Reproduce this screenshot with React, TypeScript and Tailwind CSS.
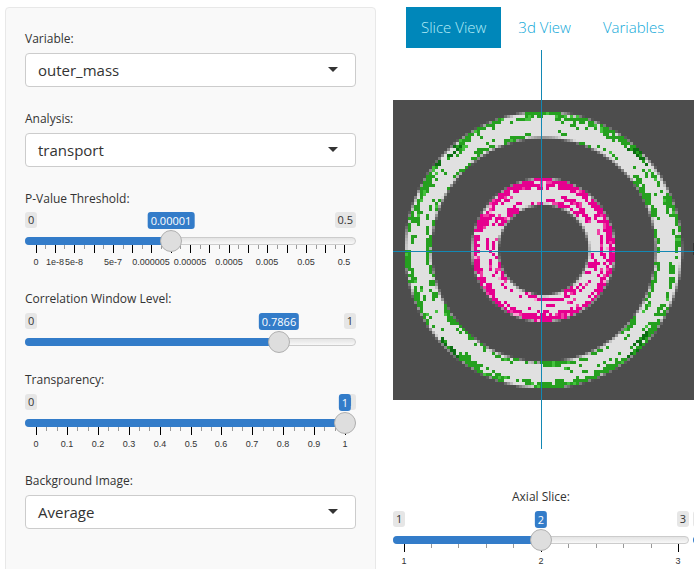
import { ReactNode } from "react";

const font = "font-['Open_Sans','Noto_Sans',sans-serif]";

function hash(a: number, b: number, c = 0) {
  let h = (a * 374761393 + b * 668265263 + c * 2147483647) | 0;
  h = Math.imul(h ^ (h >>> 13), 1274126177);
  h = Math.imul(h ^ (h >>> 15), 2246822519);
  return ((h ^ (h >>> 16)) >>> 0) / 4294967296;
}

function mix(t: number) {
  const v = Math.round(0x4d + (0xe0 - 0x4d) * t);
  return `rgb(${v},${v},${v})`;
}

// builds the voxel picture as one path per colour
function buildVoxels() {
  const cx = 150.5;
  const cy = 150;
  const cells: Record<string, string[]> = {};
  const put = (color: string, i: number, j: number) => {
    (cells[color] ||= []).push(`M${i * 3} ${j * 3}h3v3h-3z`);
  };
  for (let j = 0; j < 100; j++) {
    for (let i = 0; i < 101; i++) {
      const dx = i * 3 + 1.5 - cx;
      const dy = j * 3 + 1.5 - cy;
      const r = Math.hypot(dx, dy);
      const th = Math.atan2(dy, dx);
      const outerRing = r > 100;
      const rOut = outerRing ? 138 : 71.5;
      const rIn = outerRing ? 112.5 : 45.5;
      const a = Math.min(
        Math.max(0, Math.min(1, (rOut - r) / 3 + 0.5)),
        Math.max(0, Math.min(1, (r - rIn) / 3 + 0.5)),
      );
      if (a <= 0) continue;
      const dO = rOut - r;
      const dI = r - rIn;
      // streaks run along the ring, so noise cells are long in arc length
      const arc = (th + Math.PI) * r;
      const band = Math.floor(r / 3);
      const cell = hash(Math.floor(arc / 13 + (band % 2) * 0.5), band, outerRing ? 1 : 2);
      const gap = hash(Math.floor((th + Math.PI) * 7), outerRing ? 3 : 4);
      const n = hash(i, j);
      let hit = false;
      if (outerRing) {
        if (dO < 4) hit = gap > 0.15 && cell > 0.1;
        else if (dO < 7) hit = cell > 0.48 - gap * 0.2;
        else if (dO < 10.5) hit = cell > 0.8;
        else if (dI < 3) hit = cell > 0.55;
        else if (dI < 6) hit = cell > 0.6;
        else if (dI < 9) hit = cell > 0.86;
        else hit = n < 0.012;
      } else {
        if (dO < 0.5) hit = false;
        else if (dO < 7) hit = cell > 0.1;
        else if (dO < 11) hit = cell > 0.7;
        else if (dI < 2) hit = cell > 0.7;
        else if (dI < 7) hit = cell > 0.58;
        else hit = cell > 0.75;
      }
      if (a >= 0.5 && hit && n < 0.9) {
        const k = hash(i, j, 7);
        if (outerRing) {
          const diag = Math.abs(Math.sin(2 * th));
          if (diag > 0.97 && dO < 9 && k < 0.6) put("#0b6e12", i, j);
          else if (k < 0.08) put("#45c23e", i, j);
          else put("#25a01f", i, j);
        } else if (k < 0.12) put("#f03fa6", i, j);
        else if (k < 0.16) put("#f9a3d2", i, j);
        else put("#e6008f", i, j);
      } else {
        put(mix(a), i, j);
      }
    }
  }
  return Object.entries(cells).map(([color, parts]) => ({ color, d: parts.join("") }));
}

const voxels = buildVoxels();

function Label({ children, className = "" }: { children: ReactNode; className?: string }) {
  return <div className={`h-[18px] text-[12px] leading-[18px] text-[#333] ${className}`}>{children}</div>;
}

function Select({ value }: { value: string }) {
  return (
    <div className="flex h-[34px] items-center justify-between rounded border border-[#ccc] bg-white pl-3 pr-[17px] text-[15px] text-[#333]">
      <span>{value}</span>
      <svg width="10" height="5" viewBox="0 0 10 5" className="mb-px">
        <path d="M0 0h10L5 5z" fill="#333" />
      </svg>
    </div>
  );
}

type Mark = { x: number; label: string };

function Slider(props: {
  width: string;
  height: string;
  minLabel: string;
  maxLabel: string;
  value: string;
  at: number;
  marks?: Mark[];
  minor?: number[];
}) {
  const { width, height, minLabel, maxLabel, value, at, marks = [], minor = [] } = props;
  return (
    <div className={`relative ${width} ${height}`}>
      <span className="absolute left-0 top-0 rounded-[3px] bg-[#e6e6e6] px-[3px] text-[11px] leading-4 text-[#333]">{minLabel}</span>
      <span className="absolute right-0 top-0 rounded-[3px] bg-[#e6e6e6] px-[3px] text-[11px] leading-4 text-[#333]">{maxLabel}</span>
      <span
        className="absolute top-0 -translate-x-1/2 whitespace-nowrap rounded-[3px] bg-[#337cc9] px-[3px] text-[11px] leading-[17px] text-white"
        style={{ left: at }}
      >
        {value}
      </span>
      <div className="absolute inset-x-0 top-[25px] h-2 rounded-full border border-[#ccc] bg-gradient-to-b from-[#e4e4e4] to-[#f8f8f8]" />
      <div className="absolute left-0 top-[25px] h-2 rounded-l-full bg-[#337cc9]" style={{ width: at }} />
      {minor.map((x) => (
        <i key={x} className="absolute top-[33px] h-1 w-px bg-[#999]" style={{ left: x }} />
      ))}
      {marks.map((m) => (
        <i key={m.x} className="absolute top-[33px] h-2 w-px bg-black" style={{ left: m.x }} />
      ))}
      {marks.map((m) => (
        <span
          key={m.x}
          className="absolute top-[44px] -translate-x-1/2 whitespace-nowrap font-['Liberation_Sans',sans-serif] text-[9px] leading-3 text-[#333]"
          style={{ left: m.x }}
        >
          {m.label}
        </span>
      ))}
      <div
        className="absolute top-[18px] size-[22px] -translate-x-1/2 rounded-full border border-[#b0b0b0] bg-[#dedede]"
        style={{ left: at }}
      />
    </div>
  );
}

const pMarks: Mark[] = [
  { x: 11, label: "0" },
  { x: 30, label: "1e-8" },
  { x: 49, label: "5e-8" },
  { x: 69, label: "" },
  { x: 88, label: "5e-7" },
  { x: 107, label: "" },
  { x: 126, label: "0.000005" },
  { x: 146, label: "" },
  { x: 165, label: "0.00005" },
  { x: 184, label: "" },
  { x: 204, label: "0.0005" },
  { x: 223, label: "" },
  { x: 242, label: "0.005" },
  { x: 262, label: "" },
  { x: 281, label: "0.05" },
  { x: 300, label: "" },
  { x: 319, label: "0.5" },
];
const pMinor = [20, 39, 59, 78, 98, 117, 136, 155, 175, 194, 213, 233, 252, 271, 291, 310];

const tMarks: Mark[] = ["0", "0.1", "0.2", "0.3", "0.4", "0.5", "0.6", "0.7", "0.8", "0.9", "1"].map((label, i) => ({
  x: 11 + Math.round(i * 30.9),
  label,
}));
const tMinor = Array.from({ length: 30 }, (_, i) => i)
  .filter((i) => i % 3 !== 0)
  .map((i) => 11 + Math.round(i * 10.3));

const axialMarks: Mark[] = [
  { x: 11, label: "1" },
  { x: 148, label: "2" },
  { x: 285, label: "3" },
];
const axialMinor = [38, 65, 93, 120, 175, 203, 230, 258];

export default function App() {
  return (
    <div className={`flex h-[569px] w-[694px] overflow-hidden bg-white ${font}`}>
      {/* sidebar */}
      <div className="ml-[5px] mt-[7px] h-[580px] w-[371px] shrink-0 rounded-t border border-[#e8e8e8] bg-[#f9f9f9] px-[19px] pt-[22px]">
        <Label className="mb-[5px]">Variable:</Label>
        <Select value="outer_mass" />
        <Label className="mb-[5px] mt-[23px]">Analysis:</Label>
        <Select value="transport" />
        <Label className="mb-[4px] mt-[23px]">P-Value Threshold:</Label>
        <Slider
          width="w-[331px]"
          height="h-[78px]"
          minLabel="0"
          maxLabel="0.5"
          value="0.00001"
          at={146}
          marks={pMarks}
          minor={pMinor}
        />
        <Label className="mb-[5px]">Correlation Window Level:</Label>
        <Slider width="w-[331px]" height="h-[58px]" minLabel="0" maxLabel="1" value="0.7866" at={254} />
        <Label className="mb-[5px]">Transparency:</Label>
        <Slider width="w-[331px]" height="h-[78px]" minLabel="0" maxLabel="1" value="1" at={320} marks={tMarks} minor={tMinor} />
        <Label className="mb-[5px]">Background Image:</Label>
        <Select value="Average" />
      </div>

      {/* viewer */}
      <div className="ml-[17px] mt-[7px] flex w-[301px] shrink-0 flex-col">
        <div className="ml-[13px] flex h-[41px] gap-[2px] text-[15px] font-light">
          <div className="flex items-center bg-[#0087ba] px-[15px] text-[#b5ecf7]">Slice View</div>
          <div className="flex items-center px-[15px] text-[#0fa8d8]">3d View</div>
          <div className="flex items-center px-[15px] text-[#0fa8d8]">Variables</div>
        </div>
        <div className="relative mt-[2px] h-[400px] pt-[50px]">
          <svg width="301" height="300" viewBox="0 0 301 300" shapeRendering="crispEdges" className="block bg-[#4d4d4d]">
            {voxels.map((v) => (
              <path key={v.color} d={v.d} fill={v.color} />
            ))}
            <rect x="300" y="143" width="1" height="12" fill="#333" />
          </svg>
          <div className="absolute bottom-0 left-[148px] top-0 w-px bg-[#1388b4]" />
          <div className="absolute inset-x-0 top-[201px] h-px bg-[#1388b4]" />
        </div>
        <Label className="mb-[5px] mt-[39px] w-[296px] text-center">Axial Slice:</Label>
        <div className="flex w-[320px] gap-[4px]">
          <Slider width="w-[296px]" height="h-[58px]" minLabel="1" maxLabel="3" value="2" at={148} marks={axialMarks} minor={axialMinor} />
          <div className="w-5 shrink-0">
            <div className="h-4 rounded-[3px] bg-[#e6e6e6]" />
            <div className="mt-[9px] h-2 rounded-l-full bg-[#337cc9]" />
          </div>
        </div>
      </div>
    </div>
  );
}
